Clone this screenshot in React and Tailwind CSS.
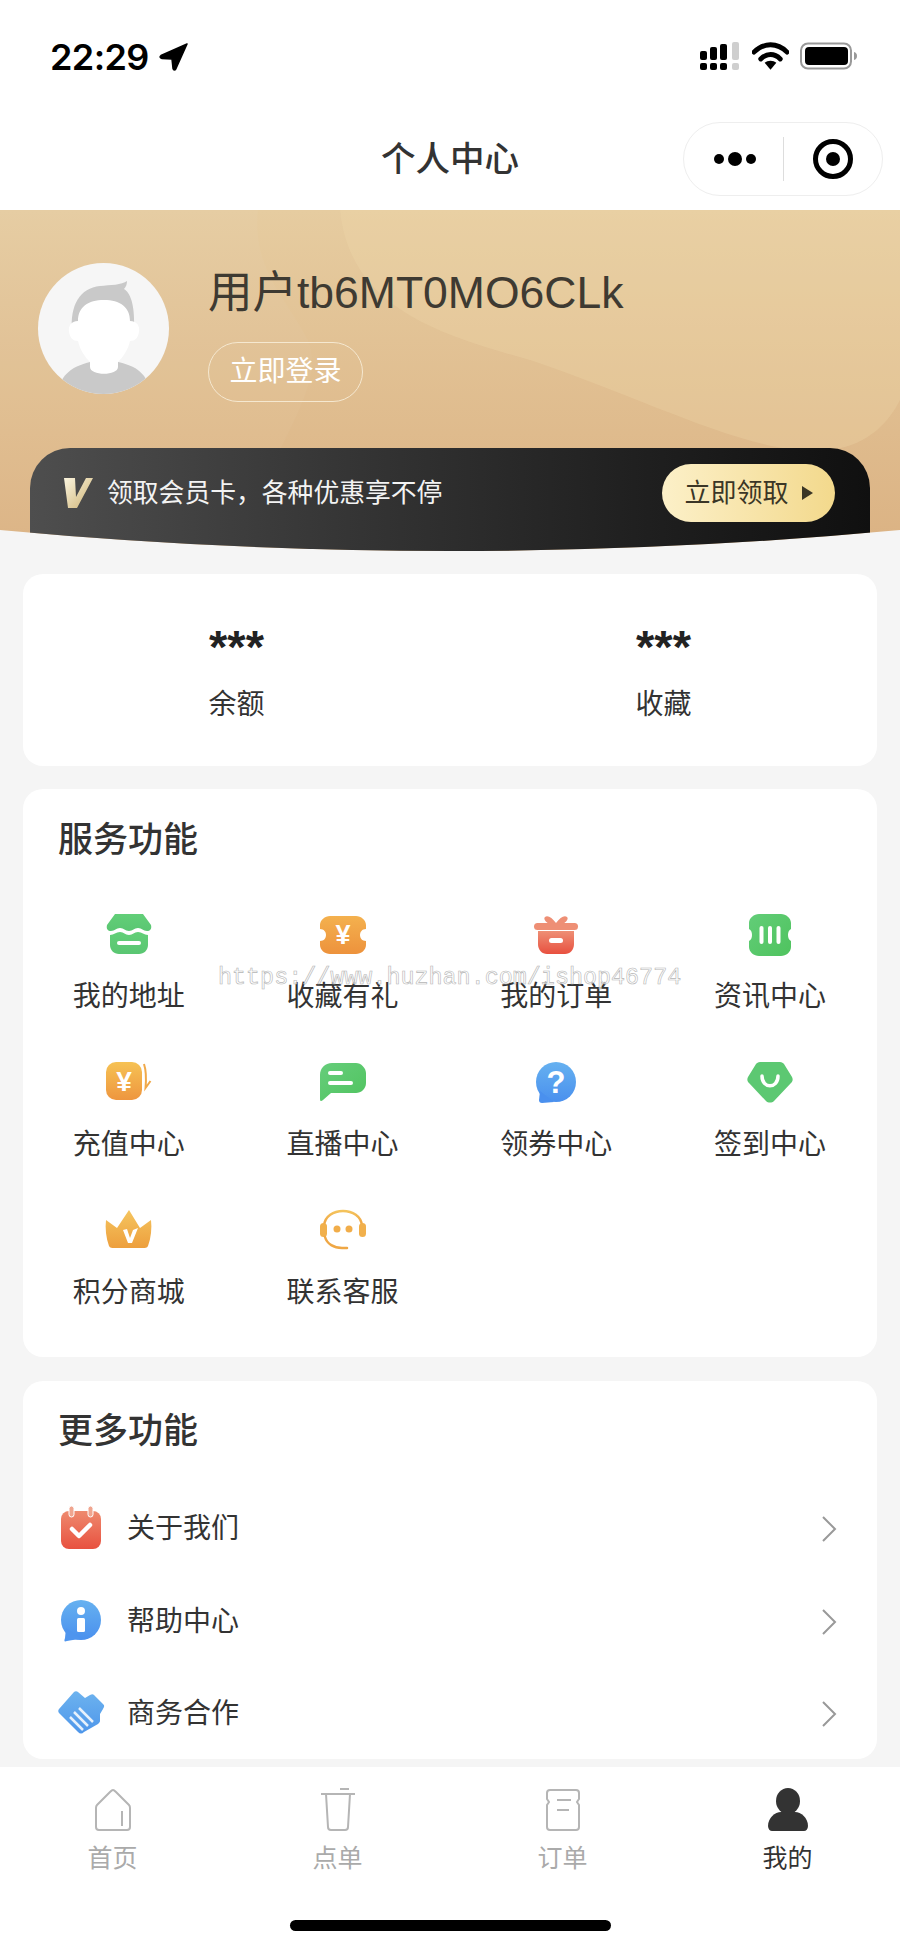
import React from "react";

const SANS = "font-['Liberation_Sans','Noto_Sans_CJK_SC',sans-serif]";

function Grad({ id, from, to, x2 = 0, y2 = 1 }) {
  return (
    <defs>
      <linearGradient id={id} x1="0" y1="0" x2={x2} y2={y2}>
        <stop offset="0" stopColor={from} />
        <stop offset="1" stopColor={to} />
      </linearGradient>
    </defs>
  );
}

function Icon48({ children }) {
  return (
    <svg width="48" height="48" viewBox="0 0 48 48" className="shrink-0">
      {children}
    </svg>
  );
}

const Yen = ({ x, y, size }) => (
  <text x={x} y={y} fontSize={size} fontWeight="700" textAnchor="middle" fill="#fff" fontFamily="Liberation Sans, sans-serif">¥</text>
);

const StoreIcon = () => (
  <Icon48>
    <Grad id="store" from="#62cf78" to="#5ac672" />
    <path d="M10 3h28l8 11c1 4-1 6-4 6-4 0-5-3-9-3s-5 3-9 3-5-3-9-3-5 3-9 3c-3 0-5-2-4-6z" fill="url(#store)" />
    <path d="M5 24c4 0 6-3 10-3s5 3 9 3 5-3 9-3 6 3 10 3v10c0 5-4 9-9 9H14c-5 0-9-4-9-9z" fill="url(#store)" />
    <rect x="12" y="30" width="24" height="4" rx="2" fill="#fff" />
  </Icon48>
);

const TicketIcon = () => (
  <Icon48>
    <Grad id="ticket" from="#f4b14e" to="#ed923c" />
    <path d="M11 5h26c5 0 10 4 10 9v4c-4 0-6 3-6 6s2 6 6 6v4c0 5-5 9-10 9H11C6 43 1 39 1 34v-4c4 0 6-3 6-6s-2-6-6-6v-4c0-5 5-9 10-9z" fill="url(#ticket)" />
    <Yen x={24} y={33} size={27} />
  </Icon48>
);

const RechargeIcon = () => (
  <Icon48>
    <Grad id="recharge" from="#f6c254" to="#ee963f" />
    <rect x="1" y="3" width="36" height="38" rx="10" fill="url(#recharge)" />
    <Yen x={19} y={32} size={28} />
    <path d="M39 5c2 6 2.500 13 1.500 24l5-7" fill="none" stroke="#f0a94a" strokeWidth="2" />
  </Icon48>
);

const ChatIcon = () => (
  <Icon48>
    <Grad id="chat" from="#66cd7b" to="#50c45f" x2={1} y2={1} />
    <path d="M13 4h24c5 0 10 5 10 10v10c0 6-5 10-10 10H12L4 41c-2 2-3 1-3-1V16C1 9 6 4 13 4z" fill="url(#chat)" />
    <rect x="9" y="12" width="15" height="4" rx="2" fill="#fff" />
    <rect x="9" y="22" width="25" height="4" rx="2" fill="#fff" />
  </Icon48>
);

const GiftIcon = () => (
  <Icon48>
    <Grad id="gift" from="#ee8f75" to="#e8503f" />
    <path d="M13 6c3-2 7 1 11 6 4-5 8-8 11-6 2 2-1 5-4 7H17c-3-2-6-5-4-7z" fill="#ee8f75" />
    <rect x="2" y="12" width="44" height="7" rx="3.500" fill="#ee8f75" />
    <path d="M6 20h36v13c0 6-4 10-9 10H15c-5 0-9-4-9-10z" fill="url(#gift)" />
    <rect x="17" y="27" width="14" height="5" rx="2.500" fill="#fff" />
  </Icon48>
);

const NewsIcon = () => (
  <Icon48>
    <Grad id="news" from="#62cd78" to="#4fc35e" x2={1} y2={1} />
    <path d="M13 3h22c5 0 10 4 10 9v6c-2 1-3 3-3 6s1 5 3 6v6c0 5-5 9-10 9H13C8 45 3 41 3 36v-6c2-1 3-3 3-6s-1-5-3-6v-6c0-5 5-9 10-9z" fill="url(#news)" />
    <rect x="13.500" y="15" width="4" height="18" rx="2" fill="#fff" />
    <rect x="22" y="15" width="4" height="18" rx="2" fill="#fff" />
    <rect x="30.500" y="15" width="4" height="18" rx="2" fill="#fff" />
  </Icon48>
);

const QuestionIcon = () => (
  <Icon48>
    <Grad id="question" from="#66b1f0" to="#4a90ee" />
    <circle cx="24" cy="23" r="20" fill="url(#question)" />
    <path d="M8 32l-1 9c0 2 1 3 3 3l12-1z" fill="#4a90ee" />
    <text x="24" y="34" fontSize="31" fontWeight="700" textAnchor="middle" fill="#fff" fontFamily="Liberation Sans, sans-serif">?</text>
  </Icon48>
);

const ShieldIcon = () => (
  <Icon48>
    <path d="M14 3h20c2 0 3 1 4 2l8 13c1 2 1 4-1 6L28 42c-2 2-6 2-8 0L3 24c-2-2-2-4-1-6l8-13c1-1 2-2 4-2z" fill="#5cc872" />
    <path d="M16 14c0 13 16 13 16 0" fill="none" stroke="#fff" strokeWidth="3.500" strokeLinecap="round" transform="translate(0 3)" />
  </Icon48>
);

const CrownIcon = () => (
  <Icon48>
    <Grad id="crown" from="#f5c55f" to="#ed9f3d" />
    <path d="M1 13l11 8L24 3l11 18 11-8c1 8 0 18-3 26-1 2-3 2-5 2H9c-2 0-4 0-5-2C1 31 0 21 1 13z" fill="url(#crown)" />
    <path d="M18 23l5 13h4l6-15-5 2-3 8-3-9z" fill="#fff" />
  </Icon48>
);

const HeadsetIcon = () => (
  <Icon48>
    <Grad id="headset" from="#f4c35c" to="#ee9f3f" />
    <path d="M5 19C6 -1 42 -1 43 19" fill="none" stroke="url(#headset)" strokeWidth="2.500" />
    <rect x="1" y="16" width="7" height="14" rx="3.500" fill="#f1b04c" />
    <rect x="40" y="16" width="7" height="14" rx="3.500" fill="#f1b04c" />
    <circle cx="18" cy="22" r="3.500" fill="#f1ad4a" />
    <circle cx="30" cy="22" r="3.500" fill="#f1ad4a" />
    <path d="M6 30c2 7 9 11 17 11h5" fill="none" stroke="#efa745" strokeWidth="2.500" strokeLinecap="round" />
  </Icon48>
);

const CalendarIcon = () => (
  <Icon48>
    <Grad id="calendar" from="#ee8a6e" to="#e8513f" />
    <rect x="4" y="6" width="40" height="38" rx="8" fill="url(#calendar)" />
    <rect x="12" y="1" width="5" height="11" rx="2.500" fill="#f0a58f" stroke="#fff" strokeWidth="1" />
    <rect x="31" y="1" width="5" height="11" rx="2.500" fill="#f0a58f" stroke="#fff" strokeWidth="1" />
    <path d="M15 24l7 7 11-11" fill="none" stroke="#fff" strokeWidth="4.500" strokeLinecap="round" strokeLinejoin="round" />
  </Icon48>
);

const InfoIcon = () => (
  <Icon48>
    <Grad id="info" from="#66b1f0" to="#4a90ee" />
    <circle cx="24" cy="22" r="20" fill="url(#info)" />
    <path d="M9 30l-1 10c-1 3-1 4 2 3 6-1 10-2 14-2z" fill="#4f95ee" />
    <circle cx="24" cy="13" r="4" fill="#fff" />
    <rect x="20" y="20" width="8" height="14" rx="1.500" fill="#fff" />
  </Icon48>
);

const HandsIcon = () => (
  <Icon48>
    <Grad id="hands" from="#6db3ef" to="#4e96ea" />
    <path d="M17 2c1-1 3-1 4 0l7 6 5-3c2-1 3-1 4 0l9 9c2 2 1 3 0 5l-3 5v7c0 1-1 2-2 3L27 42c-2 2-4 2-6 0L2 23c-1-1-1-3 0-4z" fill="url(#hands)" />
    <path d="M17 22l14 14M13 27l13 13M22 18l14 14" stroke="#fff" strokeWidth="2.500" opacity="0.85" />
  </Icon48>
);

const services = [
  { label: "我的地址", Icon: StoreIcon },
  { label: "收藏有礼", Icon: TicketIcon },
  { label: "我的订单", Icon: GiftIcon },
  { label: "资讯中心", Icon: NewsIcon },
  { label: "充值中心", Icon: RechargeIcon },
  { label: "直播中心", Icon: ChatIcon },
  { label: "领券中心", Icon: QuestionIcon },
  { label: "签到中心", Icon: ShieldIcon },
  { label: "积分商城", Icon: CrownIcon },
  { label: "联系客服", Icon: HeadsetIcon },
];

const more = [
  { label: "关于我们", Icon: CalendarIcon },
  { label: "帮助中心", Icon: InfoIcon },
  { label: "商务合作", Icon: HandsIcon },
];

function StatusBar() {
  return (
    <div className="flex h-[114px] items-start justify-between pt-[38px] pl-[50px] pr-[42px]">
      <div className="flex items-center gap-[10px]">
        <span className="font-['Inter',sans-serif] text-[36px] leading-[38px] font-semibold tracking-[-0.6px] text-black">22:29</span>
        <svg width="30" height="28" viewBox="0 0 30 28">
          <path d="M28 1L2 12.500c-1.500 1-1 2.500 1 3L13 16l1 9.500c.5 2 2.500 2 3 0z" fill="#000" stroke="#000" strokeWidth="1.500" strokeLinejoin="round" />
        </svg>
      </div>
      <div className="flex items-center gap-[11px] pt-[4px]">
        <svg width="41" height="28" viewBox="0 0 41 28">
          <rect x="0" y="9" width="7" height="9" rx="2" fill="#000" />
          <rect x="0" y="21" width="7" height="7" rx="2" fill="#000" />
          <rect x="10" y="5" width="7" height="13" rx="2" fill="#000" />
          <rect x="10" y="21" width="7" height="7" rx="2" fill="#000" />
          <rect x="20" y="2" width="7" height="16" rx="2" fill="#000" />
          <rect x="20" y="21" width="7" height="7" rx="2" fill="#000" />
          <rect x="32" y="0" width="7" height="18" rx="2" fill="#cfcfcf" />
          <rect x="32" y="21" width="7" height="7" rx="2" fill="#cfcfcf" />
        </svg>
        <svg width="37" height="28" viewBox="0 0 38 28">
          <path d="M2 10c10-10 24-10 34 0" fill="none" stroke="#000" strokeWidth="5" strokeLinecap="round" />
          <path d="M9 17c6-6 14-6 20 0" fill="none" stroke="#000" strokeWidth="5" strokeLinecap="round" />
          <path d="M13 21c3-3 9-3 12 0l-6 7z" fill="#000" />
        </svg>
        <svg width="58" height="28" viewBox="0 0 58 28">
          <rect x="1" y="1.500" width="50" height="25" rx="7" fill="none" stroke="#999" strokeWidth="2" />
          <rect x="5" y="5" width="43" height="18" rx="4" fill="#000" />
          <path d="M54 10c2 .5 3 2 3 4s-1 3.500-3 4z" fill="#999" />
        </svg>
      </div>
    </div>
  );
}

function NavBar() {
  return (
    <div className="grid h-[96px] grid-cols-[1fr_auto_1fr] items-center pb-[6px]">
      <div />
      <h1 className="text-[34.500px] leading-[48px] font-medium text-[#333]">个人中心</h1>
      <div className="flex justify-end pr-[17px]">
        <div className="flex h-[74px] w-[200px] items-center rounded-full border border-[#eeeeee] bg-white">
          <div className="flex w-[99px] items-center justify-center gap-[4px] pl-[3px]">
            <span className="h-[10px] w-[10px] rounded-full bg-black" />
            <span className="h-[14px] w-[14px] rounded-full bg-black" />
            <span className="h-[10px] w-[10px] rounded-full bg-black" />
          </div>
          <div className="h-[44px] w-px bg-[#dddddd]" />
          <div className="flex flex-1 items-center justify-center">
            <div className="flex h-[40px] w-[40px] items-center justify-center rounded-full border-[5px] border-black">
              <span className="h-[14px] w-[14px] rounded-full bg-black" />
            </div>
          </div>
        </div>
      </div>
    </div>
  );
}

function Avatar() {
  return (
    <svg width="131" height="131" viewBox="0 0 131 131" className="shrink-0">
      <defs>
        <clipPath id="avatar-clip">
          <circle cx="65.500" cy="65.500" r="65.500" />
        </clipPath>
      </defs>
      <g clipPath="url(#avatar-clip)">
        <rect width="131" height="131" fill="#f6f6f6" />
        <path d="M20 131c2-20 14-28 36-33h20c24 5 34 13 36 33z" fill="#c9c9c9" />
        <path d="M34 68c-2-26 8-43 28-45 10-1 22-1 27-5 0 3-1 6-3 8 8 5 11 20 10 42z" fill="#c9c9c9" />
        <path d="M40 58c0-14 10-21 26-21s26 7 26 21c7 0 10 5 9 11-1 6-4 9-9 9-2 9-7 16-12 21v5c0 9-28 9-28 0v-5c-5-5-10-12-12-21-5 0-8-3-9-9-1-6 2-11 9-11z" fill="#fff" />
      </g>
    </svg>
  );
}

function Hero() {
  return (
    <div className="relative h-[341px] overflow-hidden bg-gradient-to-b from-[#e6cca0] to-[#dbb283] [clip-path:path('M0_0H900V320Q450_362_0_320Z')]">
      <svg width="900" height="341" viewBox="0 0 900 341" className="absolute inset-0">
        <path d="M258 0c-6 60 30 90 50 130 20 50-40 110-70 211H0V0z" fill="#ffffff" opacity="0.03" />
        <path d="M340 0c10 90 80 120 190 150 120 40 230 100 300 90 40-5 60-30 70-50V0z" fill="#f2dcae" opacity="0.28" />
      </svg>
      <div className="relative flex flex-col">
        <div className="flex h-[238px] gap-[39px] pt-[53px] pl-[38px]">
          <Avatar />
          <div className="flex flex-col items-start gap-[19.500px]">
            <div className="mt-[-0.500px] text-[44.500px] leading-[60px] text-[#3e3a32]">用户tb6MT0MO6CLk</div>
            <div className="flex h-[60px] w-[155px] items-center justify-center rounded-full border border-[#f5e8d0] text-[28px] text-white">立即登录</div>
          </div>
        </div>
        <div className="mx-[30px] flex h-[103px] justify-between rounded-t-[40px] bg-gradient-to-r from-[#4e4e4e] to-[#101010] pt-[16px] pr-[35px] pl-[34px]">
          <div className="flex h-[58px] items-center gap-[14px]">
            <svg width="29" height="30" viewBox="0 0 29 30">
              <Grad id="vmark" from="#fbf5df" to="#cdb273" x2={1} y2={1} />
              <path d="M0 0h11l1 19L22 0h7L13 30H4z" fill="url(#vmark)" />
            </svg>
            <span className="text-[25.800px] text-[#f3f3f3]">领取会员卡，各种优惠享不停</span>
          </div>
          <div className="flex h-[58px] w-[173px] items-center justify-center gap-[12px] rounded-full bg-gradient-to-r from-[#fcf0c8] to-[#f3d98c] text-[26px] text-[#3b3626]">
            立即领取
            <svg width="12" height="14" viewBox="0 0 12 14">
              <path d="M1 0l11 7-11 7z" fill="#3b3626" />
            </svg>
          </div>
        </div>
      </div>
    </div>
  );
}

function Stats() {
  return (
    <div className="mx-[23px] mt-[23px] grid h-[192px] grid-cols-2 rounded-[20px] bg-white">
      {["余额", "收藏"].map((label) => (
        <div key={label} className="flex flex-col items-center pt-[48px]">
          <div className="font-['Liberation_Sans',sans-serif] text-[47px] leading-[50px] font-bold text-[#222]">***</div>
          <div className="mt-[13px] text-[28px] leading-[40px] text-[#333]">{label}</div>
        </div>
      ))}
    </div>
  );
}

function Services() {
  return (
    <div className="mx-[23px] mt-[23px] h-[568px] rounded-[20px] bg-white pt-[27px]">
      <h2 className="pl-[35px] text-[35px] leading-[48px] font-medium text-[#333]">服务功能</h2>
      <div className="mt-[47px] ml-[-1px] grid grid-cols-4 gap-y-[42px]">
        {services.map(({ label, Icon }) => (
          <div key={label} className="flex flex-col items-center gap-[18px]">
            <Icon />
            <div className="text-[28px] leading-[40px] text-[#333]">{label}</div>
          </div>
        ))}
      </div>
    </div>
  );
}

function More() {
  return (
    <div className="mx-[23px] mt-[24px] h-[378px] rounded-[20px] bg-white pt-[26px]">
      <h2 className="pl-[35px] text-[35px] leading-[48px] font-medium text-[#333]">更多功能</h2>
      <div className="mt-[28px]">
        {more.map(({ label, Icon }) => (
          <div key={label} className="flex h-[92.5px] items-center pr-[40px] pl-[34px]">
            <Icon />
            <div className="ml-[22px] flex-1 text-[28px] leading-[40px] text-[#333]">{label}</div>
            <svg width="16" height="28" viewBox="0 0 16 28">
              <path d="M2 2l12 12L2 26" fill="none" stroke="#999" strokeWidth="2" />
            </svg>
          </div>
        ))}
      </div>
    </div>
  );
}

function TabBar() {
  const gray = "#b5b5b5";
  const tabs = [
    {
      label: "首页",
      icon: (
        <svg width="38" height="44" viewBox="0 0 38 44">
          <path d="M19 2c-1 0-2 1-3 2L3 17c-1 1-1 2-1 3v19c0 2 1 3 3 3h28c2 0 3-1 3-3V20c0-1 0-2-1-3L22 4c-1-1-2-2-3-2z" fill="none" stroke={gray} strokeWidth="2" />
          <path d="M28 23v15" stroke={gray} strokeWidth="2" />
        </svg>
      ),
    },
    {
      label: "点单",
      icon: (
        <svg width="38" height="44" viewBox="0 0 38 44">
          <path d="M2 6h34M21 1h9" stroke={gray} strokeWidth="2" />
          <path d="M7 6l2 33c0 2 1 3 3 3h14c2 0 3-1 3-3l2-33" fill="none" stroke={gray} strokeWidth="2" />
        </svg>
      ),
    },
    {
      label: "订单",
      icon: (
        <svg width="38" height="44" viewBox="0 0 38 44">
          <path d="M6 2h26c2 0 3 1 3 3v6l-2 3 2 3v22c0 2-1 3-3 3H6c-2 0-3-1-3-3V17l2-3-2-3V5c0-2 1-3 3-3z" fill="none" stroke={gray} strokeWidth="2" />
          <path d="M13 12h14M13 22h12" stroke={gray} strokeWidth="2" />
        </svg>
      ),
    },
    {
      label: "我的",
      active: true,
      icon: (
        <svg width="42" height="44" viewBox="0 0 42 44">
          <ellipse cx="21" cy="13" rx="12" ry="13" fill="#333" />
          <path d="M1 38c0-8 7-14 13-14h14c6 0 13 6 13 14 0 3-2 5-4 5H5c-2 0-4-2-4-5z" fill="#333" />
        </svg>
      ),
    },
  ];
  return (
    <div className="flex h-[181px] flex-col bg-white">
      <div className="grid grid-cols-4 pt-[21px]">
        {tabs.map((tab) => (
          <div key={tab.label} className="flex flex-col items-center">
            {tab.icon}
            <div className={`mt-[8px] text-[25px] leading-[36px] ${tab.active ? "text-[#333]" : "text-[#aaaaaa]"}`}>{tab.label}</div>
          </div>
        ))}
      </div>
      <div className="mx-auto mt-[44px] h-[11px] w-[321px] rounded-full bg-black" />
    </div>
  );
}

export default function App() {
  return (
    <div className={`relative flex h-[1948px] w-[900px] flex-col overflow-hidden bg-[#f5f5f5] ${SANS}`}>
      <div className="bg-white">
        <StatusBar />
        <NavBar />
      </div>
      <Hero />
      <div className="flex-1">
        <Stats />
        <Services />
        <More />
      </div>
      <TabBar />
      {/* watermark sits over the service grid */}
      <div className="absolute top-[963px] left-[218px] font-['Liberation_Mono',monospace] text-[23.400px] leading-[30px] whitespace-nowrap text-white/70 [-webkit-text-stroke:0.6px_#b5b5b5]">
        https://www.huzhan.com/ishop46774
      </div>
    </div>
  );
}
